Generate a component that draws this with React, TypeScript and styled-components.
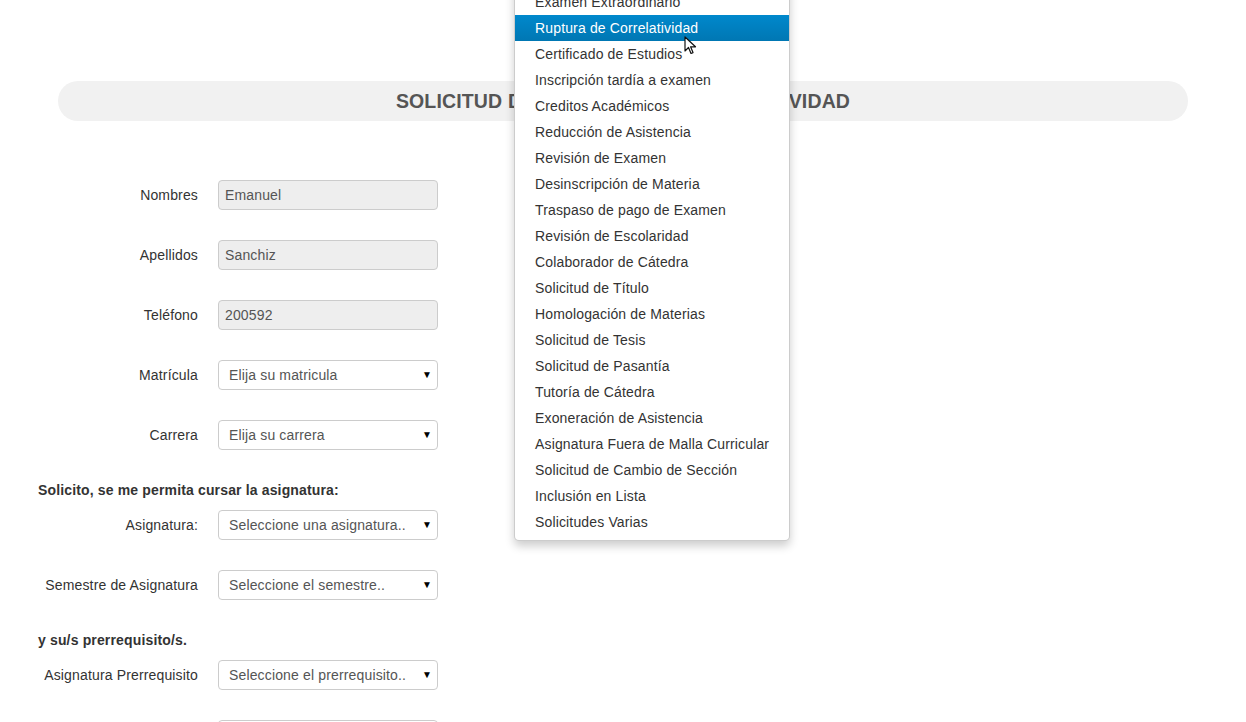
import styled, {createGlobalStyle} from "styled-components";

const GlobalStyle = createGlobalStyle`
  html, body {
    margin: 0;
    padding: 0;
    background: #fff;
    font-family: "Liberation Sans", Arial, sans-serif;
    font-size: 14px;
    line-height: 20px;
    letter-spacing: 0.15px;
    color: #333;
  }
`;

const Page = styled.div`
  position: relative;
  width: 1246px;
  height: 722px;
  overflow: hidden;
  padding: 81px 38px 0;
  box-sizing: border-box;
`;

const TitleBar = styled.div`
  margin: 0 20px;
  height: 40px;
  border-radius: 20px;
  background: #f1f1f1;
  text-align: center;
  line-height: 40px;
  font-size: 19.5px;
  font-weight: bold;
  color: #555;
`;

const Form = styled.div`
  margin-top: 59px;
  display: flex;
  flex-direction: column;
`;

const Row = styled.div`
  display: flex;
  align-items: flex-start;
  margin-bottom: 30px;
`;

const Label = styled.div`
  width: 160px;
  text-align: right;
  padding-top: 5px;
  line-height: 20px;
`;

const Input = styled.div`
  margin-left: 20px;
  width: 220px;
  height: 30px;
  box-sizing: border-box;
  padding: 4px 6px;
  line-height: 20px;
  border: 1px solid #ccc;
  border-radius: 4px;
  background: #eee;
  color: #555;
`;

const Select = styled.div`
  margin-left: 20px;
  width: 220px;
  height: 30px;
  box-sizing: border-box;
  padding: 4px 10px;
  line-height: 20px;
  border: 1px solid #ccc;
  border-radius: 4px;
  background: #fff;
  color: #555;
  display: flex;
  justify-content: space-between;
  align-items: center;
`;

const Arrow = styled.span`
  font-size: 10px;
  color: #000;
  margin-right: -5px;
`;

const SectionTitle = styled.div`
  font-weight: bold;
  margin-bottom: 10px;
  line-height: 20px;
`;

const Menu = styled.ul`
  position: absolute;
  left: 514px;
  top: -17px;
  width: 276px;
  box-sizing: border-box;
  margin: 0;
  padding: 5px 0;
  list-style: none;
  background: #fff;
  border: 1px solid rgba(0, 0, 0, 0.2);
  border-radius: 0 0 5px 5px;
  box-shadow: 0 5px 10px rgba(0, 0, 0, 0.2);
`;

const MenuItem = styled.li<{ $active?: boolean }>`
  padding: 3px 20px;
  line-height: 20px;
  white-space: nowrap;
  color: ${p => (p.$active ? "#fff" : "#333")};
  background: ${p => (p.$active ? "linear-gradient(to bottom, #0088cc, #0077b3)" : "transparent")};
`;

const Cursor = styled.svg`
  position: absolute;
  left: 684px;
  top: 36px;
`;

const textFields = [
    ["Nombres", "Emanuel"],
    ["Apellidos", "Sanchiz"],
    ["Teléfono", "200592"],
];

const options = [
    "Examen Extraordinario",
    "Ruptura de Correlatividad",
    "Certificado de Estudios",
    "Inscripción tardía a examen",
    "Creditos Académicos",
    "Reducción de Asistencia",
    "Revisión de Examen",
    "Desinscripción de Materia",
    "Traspaso de pago de Examen",
    "Revisión de Escolaridad",
    "Colaborador de Cátedra",
    "Solicitud de Título",
    "Homologación de Materias",
    "Solicitud de Tesis",
    "Solicitud de Pasantía",
    "Tutoría de Cátedra",
    "Exoneración de Asistencia",
    "Asignatura Fuera de Malla Curricular",
    "Solicitud de Cambio de Sección",
    "Inclusión en Lista",
    "Solicitudes Varias",
];

function SelectField({label, placeholder}: { label: string; placeholder: string }) {
    return (
        <Row>
            <Label>{label}</Label>
            <Select>
                <span>{placeholder}</span>
                <Arrow>▼</Arrow>
            </Select>
        </Row>
    );
}

export default function App() {
    return (
        <Page>
            <GlobalStyle/>
            <TitleBar>SOLICITUD DE RUPTURA DE CORRELATIVIDAD</TitleBar>
            <Form>
                {textFields.map(([label, value]) => (
                    <Row key={label}>
                        <Label>{label}</Label>
                        <Input>{value}</Input>
                    </Row>
                ))}
                <SelectField label="Matrícula" placeholder="Elija su matricula"/>
                <SelectField label="Carrera" placeholder="Elija su carrera"/>
                <SectionTitle>Solicito, se me permita cursar la asignatura:</SectionTitle>
                <SelectField label="Asignatura:" placeholder="Seleccione una asignatura.."/>
                <SelectField label="Semestre de Asignatura" placeholder="Seleccione el semestre.."/>
                <SectionTitle>y su/s prerrequisito/s.</SectionTitle>
                <SelectField label="Asignatura Prerrequisito" placeholder="Seleccione el prerrequisito.."/>
                <SelectField label="" placeholder=""/>
            </Form>
            <Menu>
                {options.map(o => (
                    <MenuItem key={o} $active={o === "Ruptura de Correlatividad"}>{o}</MenuItem>
                ))}
            </Menu>
            <Cursor width="14" height="20" viewBox="0 0 14 20">
                <path d="M1 1 L1 15 L4.5 11.5 L7 17.5 L9 16.6 L6.6 10.8 L11.5 10.8 Z" fill="#fff" stroke="#111"
                      strokeWidth="1.2" strokeLinejoin="round"/>
            </Cursor>
        </Page>
    );
}
